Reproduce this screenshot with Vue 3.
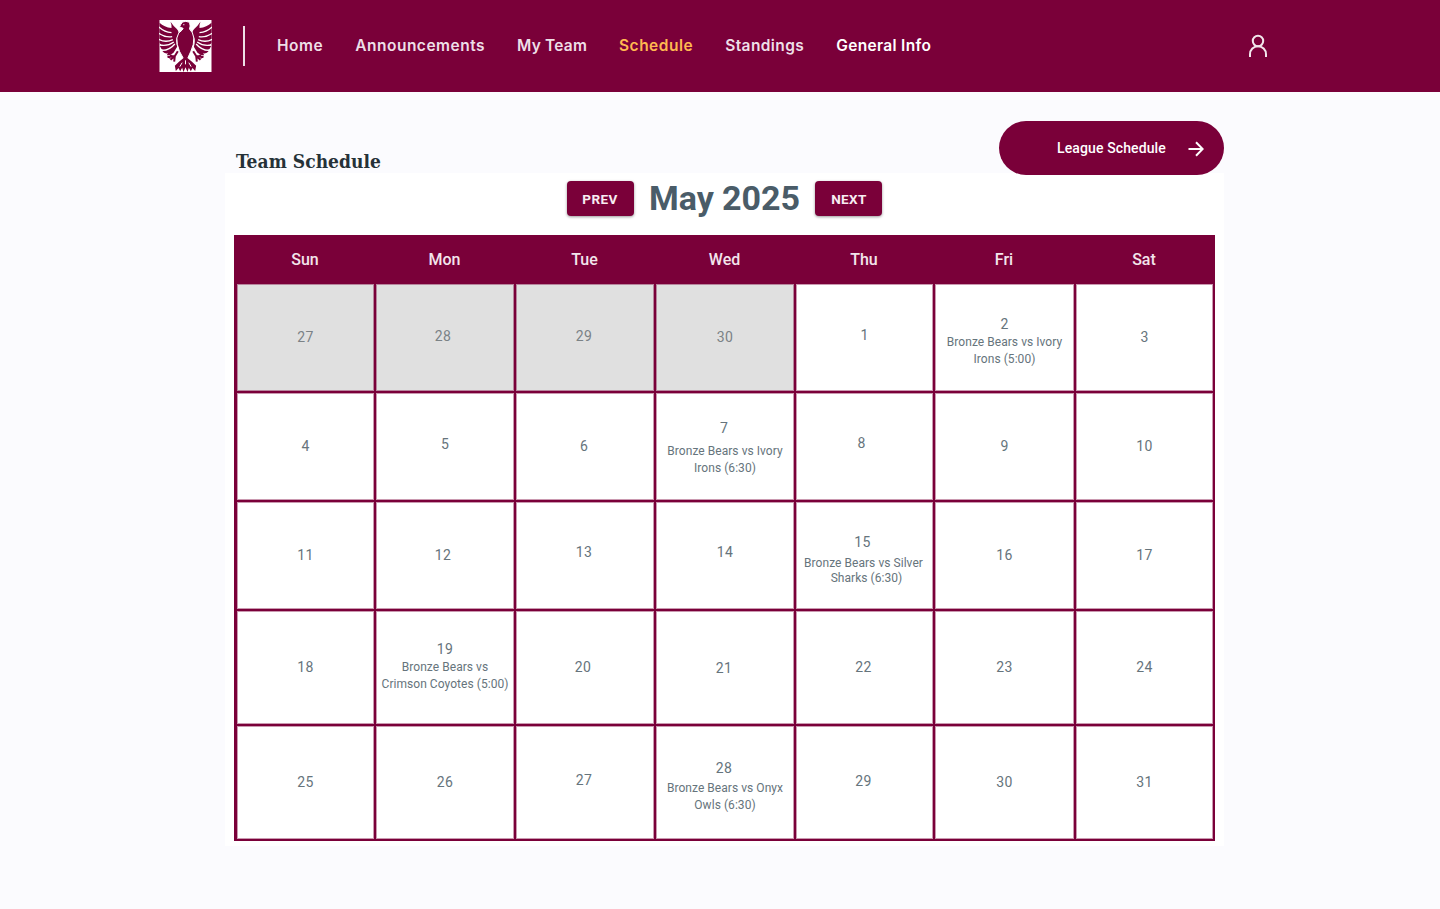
<script setup>
const nav = [
  { label: 'Home', cls: 'home' },
  { label: 'Announcements', cls: 'announcements' },
  { label: 'My Team', cls: 'team' },
  { label: 'Schedule', cls: 'schedule active' },
  { label: 'Standings', cls: 'standings' },
  { label: 'General Info', cls: 'info' },
]
const weekdays = ['Sun', 'Mon', 'Tue', 'Wed', 'Thu', 'Fri', 'Sat']
const wings = ['', 'translate(156 0) scale(-1 1)']
const d = (n, x = 0, y = 0, extra = {}) => ({ n, x, y, ...extra })
const days = [
  d(27, 0, 0, { muted: true }), d(28, -2, -1, { muted: true }), d(29, -1, -1, { muted: true }), d(30, 0, 0, { muted: true }),
  d(1, 0, -2), d(2, 0, 0, { lines: ['Bronze Bears vs Ivory', 'Irons (5:00)'], top: 32, gap: 1, lh: 17 }), d(3),
  d(4), d(5, 0, -2), d(6, -1, 0), d(7, -1, 0, { lines: ['Bronze Bears vs Ivory', 'Irons (6:30)'], top: 27, gap: 6, lh: 17 }),
  d(8, -3, -3), d(9), d(10),
  d(11), d(12, -2, 0), d(13, -1, -3), d(14, 0, -3), d(15, -2, 0, { lines: ['Bronze Bears vs Silver', 'Sharks (6:30)'], top: 32, gap: 5, lh: 15, shift: true }),
  d(16), d(17),
  d(18), d(19, 0, 0, { lines: ['Bronze Bears vs', 'Crimson Coyotes (5:00)'], top: 30, gap: 1, lh: 17 }), d(20, -2, 0), d(21, -1, 1),
  d(22, -1, 0), d(23), d(24),
  d(25), d(26), d(27, -1, -2), d(28, -1, 0, { lines: ['Bronze Bears vs Onyx', 'Owls (6:30)'], top: 34, gap: 3, lh: 17 }),
  d(29, -1, -1), d(30), d(31),
]
</script>

<template>
  <div class="page">
    <header class="topbar">
      <svg class="crest" viewBox="0 0 156 156" aria-hidden="true">
        <rect width="156" height="156" fill="#fff" />
        <g v-for="t in wings" :key="t" :transform="t">
          <path fill="#7a0039" d="M0 8Q14 21 36 24Q37 14 33 5Q41 17 52 27Q62 38 53 50Q47 62 53 80L42 98Q32 107 22 106L25 100Q14 102 9 94L13 90Q4 88 1 78L5 75L0 68Z" />
          <path fill="none" stroke="#fff" stroke-width="4" d="M-2 21Q14 36 36 38M-2 40Q16 53 38 50M-2 58Q18 69 40 59M1 75Q24 80 43 66M9 91Q30 91 46 72" />
        </g>
        <path fill="#7a0039" stroke="#fff" stroke-width="3" d="M60 21L64 13L69 6L79 4L90 7L92 18L90 27Q101 37 103 54Q104 73 94 94L84 116H72L60 94Q51 73 52 54Q55 37 68 30L71 25Z" />
        <circle cx="73" cy="14" r="1.8" fill="#fff" />
        <g fill="none" stroke="#7a0039" stroke-width="6">
          <path d="M55 94L46 108L33 119M46 108L24 111M46 108L44 125M36 104L29 115" />
          <path d="M101 94L110 108L123 119M110 108L132 111M110 108L112 125M120 104L127 115" />
        </g>
        <path fill="#7a0039" d="M73 113Q59 124 46 137L49 153L57 144L62 154L68 143L72 156L78 142L84 156L88 143L94 154L99 144L107 153L110 137Q97 124 83 113Z" />
        <path d="M78 121V133M68 128L61 140M88 128L95 140" stroke="#fff" stroke-width="3" fill="none" />
      </svg>
      <span class="divider"></span>
      <nav class="nav">
        <a v-for="item in nav" :key="item.label" :class="item.cls">{{ item.label }}</a>
      </nav>
      <svg class="user" viewBox="0 0 20 24" aria-hidden="true">
        <circle cx="10" cy="7" r="5.2" />
        <path d="M2 23V20.2A8 8 0 0 1 18 20.2V23" />
      </svg>
    </header>

    <main class="content">
      <div class="heading">
        <h1>Team Schedule</h1>
        <button class="league">
          <span>League Schedule</span>
          <svg viewBox="0 0 16 16" aria-hidden="true"><path d="M.5 8H14.5M8 1.3L14.7 8L8 14.7" /></svg>
        </button>
      </div>
      <section class="calendar">
        <div class="month">
          <button class="step">PREV</button>
          <h2>May 2025</h2>
          <button class="step">NEXT</button>
        </div>
        <div class="grid">
          <div v-for="w in weekdays" :key="w" class="weekday">{{ w }}</div>
          <div
            v-for="(day, i) in days"
            :key="i"
            class="day"
            :class="{ muted: day.muted, booked: day.lines }"
            :style="day.lines ? { paddingTop: day.top + 'px' } : null"
          >
            <span class="num" :style="{ transform: `translate(${day.x}px, ${day.y}px)` }">{{ day.n }}</span>
            <div
              v-if="day.lines"
              class="event"
              :class="{ shift: day.shift }"
              :style="{ marginTop: day.gap + 'px', lineHeight: day.lh + 'px' }"
            >
              <div v-for="line in day.lines" :key="line">{{ line }}</div>
            </div>
          </div>
        </div>
      </section>
    </main>
  </div>
</template>

<style>
body {
  background: #fbfbfe;
}
</style>

<style scoped>
.page {
  height: 909px;
  overflow: hidden;
  font-family: Roboto, "Liberation Sans", sans-serif;
}
.topbar {
  box-sizing: border-box;
  height: 92px;
  padding: 0 172px 0 159px;
  display: flex;
  align-items: center;
  background: #7a0039;
}
.crest {
  width: 53px;
  height: 52px;
  flex: none;
}
.divider {
  width: 2px;
  height: 40px;
  margin: 0 32px 0 31px;
  background: #eedfe7;
}
.nav {
  display: flex;
  gap: 32px;
  font: 600 15.5px/24px Inter, sans-serif;
  color: #eedfe7;
  white-space: nowrap;
}
.home,
.announcements {
  letter-spacing: 0.51px;
}
.team {
  letter-spacing: 0.18px;
}
.schedule {
  letter-spacing: 0.5px;
}
.standings {
  letter-spacing: 0.4px;
}
.active {
  color: #ffb950;
}
.info {
  color: #fff;
  letter-spacing: 0.32px;
}
.user {
  width: 20px;
  height: 24px;
  margin-left: auto;
  fill: none;
  stroke: #f2e6ec;
  stroke-width: 2;
}
.content {
  width: 999px;
  margin-left: 225px;
}
.heading {
  height: 81px;
  display: flex;
  justify-content: space-between;
  align-items: flex-start;
}
h1 {
  margin: 56px 0 0 11px;
  font: bold 19px/26px "DejaVu Serif Condensed", "DejaVu Serif", serif;
  font-stretch: condensed;
  letter-spacing: 0.05px;
  color: #263238;
}
.league {
  box-sizing: border-box;
  position: relative;
  width: 225px;
  height: 54px;
  margin-top: 29px;
  padding: 0 20px 0 58px;
  border: 0;
  border-radius: 27px;
  display: flex;
  align-items: center;
  justify-content: space-between;
  background: #7a0039;
  color: #fff;
  font: 500 14px/20px Roboto, sans-serif;
  letter-spacing: 0.12px;
}
.league svg {
  width: 16px;
  height: 16px;
  margin-top: 2px;
  fill: none;
  stroke: #fff;
  stroke-width: 2;
}
.calendar {
  box-sizing: border-box;
  height: 673px;
  padding: 0 9px;
  background: #fff;
}
.month {
  height: 62px;
  display: flex;
  justify-content: center;
  align-items: flex-start;
  gap: 15.5px;
}
h2 {
  margin: 5px 0 0;
  font: 700 34px/40px Roboto, sans-serif;
  letter-spacing: -0.05px;
  color: #4a5c68;
}
.step {
  width: 67px;
  height: 35px;
  margin-top: 8px;
  padding: 0;
  border: 0;
  border-radius: 4px;
  background: #7a0039;
  color: #f8edf2;
  font: 700 13.5px/34px Roboto, sans-serif;
  letter-spacing: 0.4px;
  box-shadow: 0 1px 3px rgba(0, 0, 0, 0.4);
}
.grid {
  box-sizing: border-box;
  width: 981px;
  height: 606px;
  padding: 0 2px 2px 3px;
  display: grid;
  grid-template-columns: 137px 138px 138px 138px 137px 139px 137px;
  grid-template-rows: 47px 107px 107px 107px 113px 113px;
  gap: 2px;
  background: #7a0039;
}
.weekday {
  display: flex;
  align-items: center;
  justify-content: center;
  padding: 2px 1px 0 0;
  font-size: 16px;
  font-weight: 500;
  color: #f3e4eb;
}
.day {
  box-sizing: border-box;
  display: flex;
  flex-direction: column;
  align-items: center;
  justify-content: center;
  background: #fff;
  box-shadow: inset 0 0 0 1px rgba(122, 0, 57, 0.4);
  color: #66747c;
}
.day:not(.booked) {
  padding-bottom: 1px;
}
.muted {
  color: #7b8286;
  background: #e0e0e0;
}
.booked {
  justify-content: flex-start;
}
.num {
  font-size: 14px;
  line-height: 17px;
  letter-spacing: 0.3px;
}
.event {
  font-size: 12px;
  letter-spacing: 0.05px;
  text-align: center;
  white-space: nowrap;
}
.shift {
  transform: translateX(-1px);
}
.shift div:last-child {
  padding-left: 6px;
}
</style>
